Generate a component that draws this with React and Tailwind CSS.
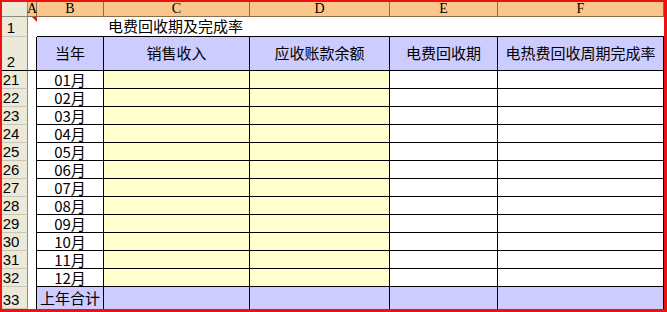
import React from "react";

const months = ["01月", "02月", "03月", "04月", "05月", "06月", "07月", "08月", "09月", "10月", "11月", "12月"];
const rowNums = [21, 22, 23, 24, 25, 26, 27, 28, 29, 30, 31, 32];

const cjk = { fontFamily: '"Noto Sans CJK SC", "Liberation Sans", sans-serif' };
const num = { fontFamily: '"Liberation Sans", sans-serif' };

const colHead = "bg-[#fbc68b] border-r border-b border-[#8a6d4c] flex items-center justify-center text-[14px] leading-none text-black";
const rowHead = "bg-[#ece9d8] border-r border-r-[#8d8a7c] border-b border-b-[#c9c6b6] flex items-end justify-center pr-[7px] pb-[1px] text-[15px] leading-[15px] text-black";
const cell = "border-r border-b border-black";

export default function App() {
  return (
    <div className="w-[667px] h-[312px] bg-white border-t-2 border-l-2 border-r-[3px] border-b-[3px] border-[#ee1111] overflow-hidden" style={cjk}>
      <div className="grid grid-cols-[26px_9px_67px_146px_140px_108px_166px] grid-rows-[15px_20px_34px_repeat(12,18px)_22px]">
        {/* column letters */}
        <div className="bg-[#ece9d8] border-r border-b border-[#8d8a7c]" />
        {["A", "B", "C", "D", "E", "F"].map((c) => (
          <div key={c} className={colHead} style={{ fontFamily: '"Liberation Serif", serif' }}>
            {c}
          </div>
        ))}

        {/* row 1 */}
        <div className={rowHead} style={num}>1</div>
        <div className="relative">
          <div className="absolute top-0 right-0 w-0 h-0 border-l-[5px] border-l-transparent border-t-[5px] border-t-[#ee1111]" />
        </div>
        <div className="border-b border-black" />
        <div className="border-b border-black relative">
          <span className="absolute left-[4px] bottom-[1px] whitespace-nowrap text-[15px] leading-[18px] text-black z-10">电费回收期及完成率</span>
        </div>
        <div className="border-b border-black" />
        <div className="border-b border-black" />
        <div className="border-b border-black" />

        {/* row 2 */}
        <div className="bg-[#ece9d8] border-r border-r-[#8d8a7c] border-b border-b-black flex items-end justify-center pr-[7px] pb-[1px] text-[15px] leading-[15px]" style={num}>2</div>
        <div className="border-r border-b border-black" />
        {["当年", "销售收入", "应收账款余额", "电费回收期", "电热费回收周期完成率"].map((t) => (
          <div key={t} className={`${cell} bg-[#ccccff] flex items-center justify-center text-[15px] text-black whitespace-nowrap`}>
            {t}
          </div>
        ))}

        {/* month rows */}
        {months.map((m, i) => (
          <React.Fragment key={m}>
            <div className={rowHead} style={num}>{rowNums[i]}</div>
            <div className="border-r border-black" />
            <div className={`${cell} bg-white flex items-end justify-center text-[15px] leading-[16px] text-black`}>{m}</div>
            <div className={`${cell} bg-[#ffffcc]`} />
            <div className={`${cell} bg-[#ffffcc]`} />
            <div className={`${cell} bg-white`} />
            <div className={`${cell} bg-white`} />
          </React.Fragment>
        ))}

        {/* row 33 */}
        <div className={rowHead} style={num}>33</div>
        <div className="border-r border-black" />
        <div className="border-r border-black bg-[#ccccff] flex items-center justify-center text-[15px] text-black whitespace-nowrap">上年合计</div>
        <div className="border-r border-black bg-[#ccccff]" />
        <div className="border-r border-black bg-[#ccccff]" />
        <div className="border-r border-black bg-[#ccccff]" />
        <div className="border-r border-black bg-[#ccccff]" />
      </div>
    </div>
  );
}
